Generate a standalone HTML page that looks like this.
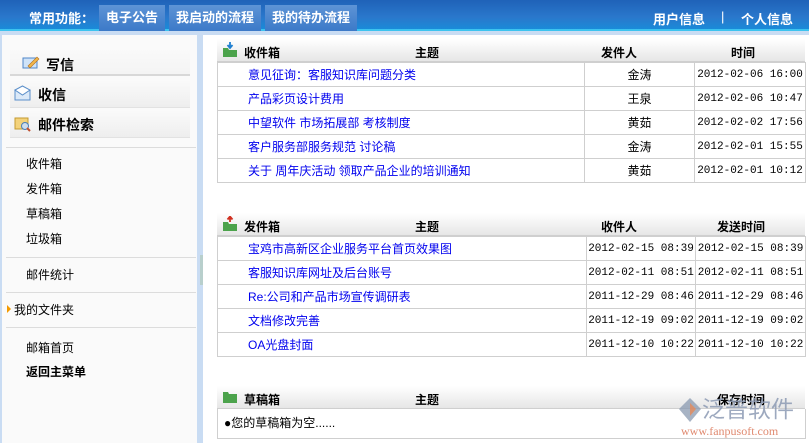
<!DOCTYPE html>
<html><head><meta charset="utf-8">
<style>
*{margin:0;padding:0;box-sizing:border-box}
html,body{width:809px;height:443px;overflow:hidden}
body{background:#c9dcf3;font-family:"Liberation Sans","Noto Sans CJK SC","WenQuanYi Zen Hei",sans-serif;font-size:12px;color:#000;position:relative}
.top{position:absolute;left:0;top:0;width:809px;height:31px;background:linear-gradient(#1f62b8,#2a78cc 60%,#1a8ad8);border-bottom:2px solid #3cc3ef}
.top .lbl{position:absolute;left:29px;top:8px;color:#fff;font-weight:bold;font-size:13px}
.tab{position:absolute;top:5px;height:26px;background:linear-gradient(#5d94d6,#3c7ac8);color:#fff;font-weight:bold;font-size:13px;line-height:26px;text-align:center}
.tr{position:absolute;top:9px;color:#fff;font-weight:bold;font-size:13px}
.side{position:absolute;left:2px;top:35px;width:195px;height:408px;background:#fafafa}
.main{position:absolute;left:203px;top:35px;width:606px;height:408px;background:#fff}
.big{position:absolute;font-weight:bold;font-size:14px}
.it{position:absolute;left:24px;font-size:12px}
.hr{position:absolute;left:4px;width:190px;height:1px;background:#dcdcdc}
.bar{position:absolute;left:8px;width:180px;height:28px;background:linear-gradient(#fafafa,#eeeeee);border-bottom:1px solid #e2e2e2}
table{position:absolute;left:217px;border-collapse:collapse;font-size:12px;table-layout:fixed}
td{border:1px solid #cfcfcf;height:24px;padding:0;white-space:nowrap;overflow:hidden}
td.s{padding-left:30px;color:#0000ee}
td.c{text-align:center}
td.d{text-align:center;font-family:"Liberation Mono",monospace;font-size:11px}
.hd{position:absolute;left:217px;width:588px;height:23px;background:linear-gradient(#ffffff,#e6e6e6);border-bottom:1px solid #cfcfcf;font-weight:bold;font-size:12px}
.hd span{position:absolute;top:5px}
</style></head><body>
<div class="top">
<div class="lbl">常用功能：</div>
<div class="tab" style="left:99px;width:66px">电子公告</div>
<div class="tab" style="left:169px;width:92px">我启动的流程</div>
<div class="tab" style="left:265px;width:92px">我的待办流程</div>
<div class="tr" style="left:653px">用户信息</div>
<div class="tr" style="left:721px;font-weight:normal">|</div>
<div class="tr" style="left:741px">个人信息</div>
</div>
<div class="side">
<div class="bar" style="top:13px;background:linear-gradient(#fafafa,#f4f4f4);border-bottom:2px solid #d8d8d8"></div>
<div class="bar" style="top:45px"></div>
<div class="bar" style="top:75px"></div>
<svg style="position:absolute;left:20px;top:20px" width="18" height="15"><rect x="1" y="3" width="14" height="10" fill="#cfe3f8" stroke="#4f86c8"/><path d="M6 11 L15 2 L17 4 L8 13 Z" fill="#f2b64a" stroke="#b07020" stroke-width=".6"/></svg>
<div class="big" style="left:44px;top:20px">写信</div>
<svg style="position:absolute;left:12px;top:50px" width="18" height="16"><rect x="1" y="5" width="15" height="10" fill="#dbe9f8" stroke="#5b8fca"/><path d="M1 5 L8.5 1 L16 5 L8.5 10 Z" fill="#fff" stroke="#5b8fca"/></svg>
<div class="big" style="left:36px;top:50px">收信</div>
<svg style="position:absolute;left:12px;top:80px" width="18" height="17"><rect x="1" y="3" width="13" height="11" fill="#f3d27a" stroke="#c49a30"/><circle cx="11" cy="11" r="3.5" fill="#cde" stroke="#4a7fb8"/><path d="M13 13 L16 16" stroke="#c05030" stroke-width="2"/></svg>
<div class="big" style="left:36px;top:80px">邮件检索</div>
<div class="hr" style="top:112px"></div>
<div class="it" style="top:120px">收件箱</div>
<div class="it" style="top:145px">发件箱</div>
<div class="it" style="top:170px">草稿箱</div>
<div class="it" style="top:195px">垃圾箱</div>
<div class="hr" style="top:222px"></div>
<div class="it" style="top:231px">邮件统计</div>
<div class="hr" style="top:257px"></div>
<div style="position:absolute;left:5px;top:270px;width:0;height:0;border-left:4px solid #f39a00;border-top:4px solid transparent;border-bottom:4px solid transparent"></div>
<div class="it" style="top:266px;left:12px">我的文件夹</div>
<div class="hr" style="top:292px"></div>
<div class="it" style="top:304px">邮箱首页</div>
<div class="it" style="top:328px;font-weight:bold">返回主菜单</div>
</div>
<div style="position:absolute;left:200px;top:255px;width:5px;height:30px;background:#b8cfcc"></div>
<div class="main"></div>

<div class="hd" style="top:39px"><svg style="position:absolute;left:5px;top:3px" width="16" height="16"><path d="M1 6 h5 l1 2 h8 v7 h-14 z" fill="#4ca34c"/><path d="M8 0 v5 M5.5 3 L8 6 L10.5 3" stroke="#1e7fd0" stroke-width="1.8" fill="none"/></svg><span style="left:27px">收件箱</span><span style="left:198px">主题</span><span style="left:384px">发件人</span><span style="left:514px">时间</span></div>
<table style="top:62px;width:589px">
<tr><td class="s" style="width:367px">意见征询：客服知识库问题分类</td><td class="c" style="width:110px">金涛</td><td class="d">2012-02-06 16:00</td></tr>
<tr><td class="s">产品彩页设计费用</td><td class="c">王泉</td><td class="d">2012-02-06 10:47</td></tr>
<tr><td class="s">中望软件 市场拓展部 考核制度</td><td class="c">黄茹</td><td class="d">2012-02-02 17:56</td></tr>
<tr><td class="s">客户服务部服务规范 讨论稿</td><td class="c">金涛</td><td class="d">2012-02-01 15:55</td></tr>
<tr><td class="s">关于 周年庆活动 领取产品企业的培训通知</td><td class="c">黄茹</td><td class="d">2012-02-01 10:12</td></tr>
</table>

<div class="hd" style="top:213px"><svg style="position:absolute;left:5px;top:3px" width="16" height="16"><path d="M1 6 h5 l1 2 h8 v7 h-14 z" fill="#4ca34c"/><path d="M8 6 v-5 M5.5 3.5 L8 0.5 L10.5 3.5" stroke="#d03020" stroke-width="1.8" fill="none"/></svg><span style="left:27px">发件箱</span><span style="left:198px">主题</span><span style="left:384px">收件人</span><span style="left:500px">发送时间</span></div>
<table style="top:236px;width:589px">
<tr><td class="s" style="width:369px">宝鸡市高新区企业服务平台首页效果图</td><td class="d" style="width:109px">2012-02-15 08:39</td><td class="d">2012-02-15 08:39</td></tr>
<tr><td class="s">客服知识库网址及后台账号</td><td class="d">2012-02-11 08:51</td><td class="d">2012-02-11 08:51</td></tr>
<tr><td class="s">Re:公司和产品市场宣传调研表</td><td class="d">2011-12-29 08:46</td><td class="d">2011-12-29 08:46</td></tr>
<tr><td class="s">文档修改完善</td><td class="d">2011-12-19 09:02</td><td class="d">2011-12-19 09:02</td></tr>
<tr><td class="s">OA光盘封面</td><td class="d">2011-12-10 10:22</td><td class="d">2011-12-10 10:22</td></tr>
</table>

<div class="hd" style="top:386px"><svg style="position:absolute;left:5px;top:3px" width="16" height="16"><path d="M1 3 h5 l1 2 h8 v9 h-14 z" fill="#4ca34c"/></svg><span style="left:27px">草稿箱</span><span style="left:198px">主题</span><span style="left:500px">保存时间</span></div>
<div style="position:absolute;left:217px;top:409px;width:589px;height:30px;border:1px solid #cfcfcf;border-top:none;padding:5px 0 0 6px">●您的草稿箱为空......</div>

<svg style="position:absolute;left:678px;top:397px" width="24" height="26"><path d="M12 1 L23 12 L12 25 L1 12 Z" fill="#8a9ab0" opacity=".75"/><path d="M12 6 L18 12 L12 19 Z" fill="#e58a5a" opacity=".8"/></svg>
<div style="position:absolute;left:702px;top:396px;font-size:23px;line-height:26px;color:#8d9bb4;opacity:.85;white-space:nowrap">泛普软件</div>
<div style="position:absolute;left:681px;top:424px;font-family:'Liberation Serif',serif;font-size:12px;color:#e08a70;white-space:nowrap">www.fanpusoft.com</div>
</body></html>
